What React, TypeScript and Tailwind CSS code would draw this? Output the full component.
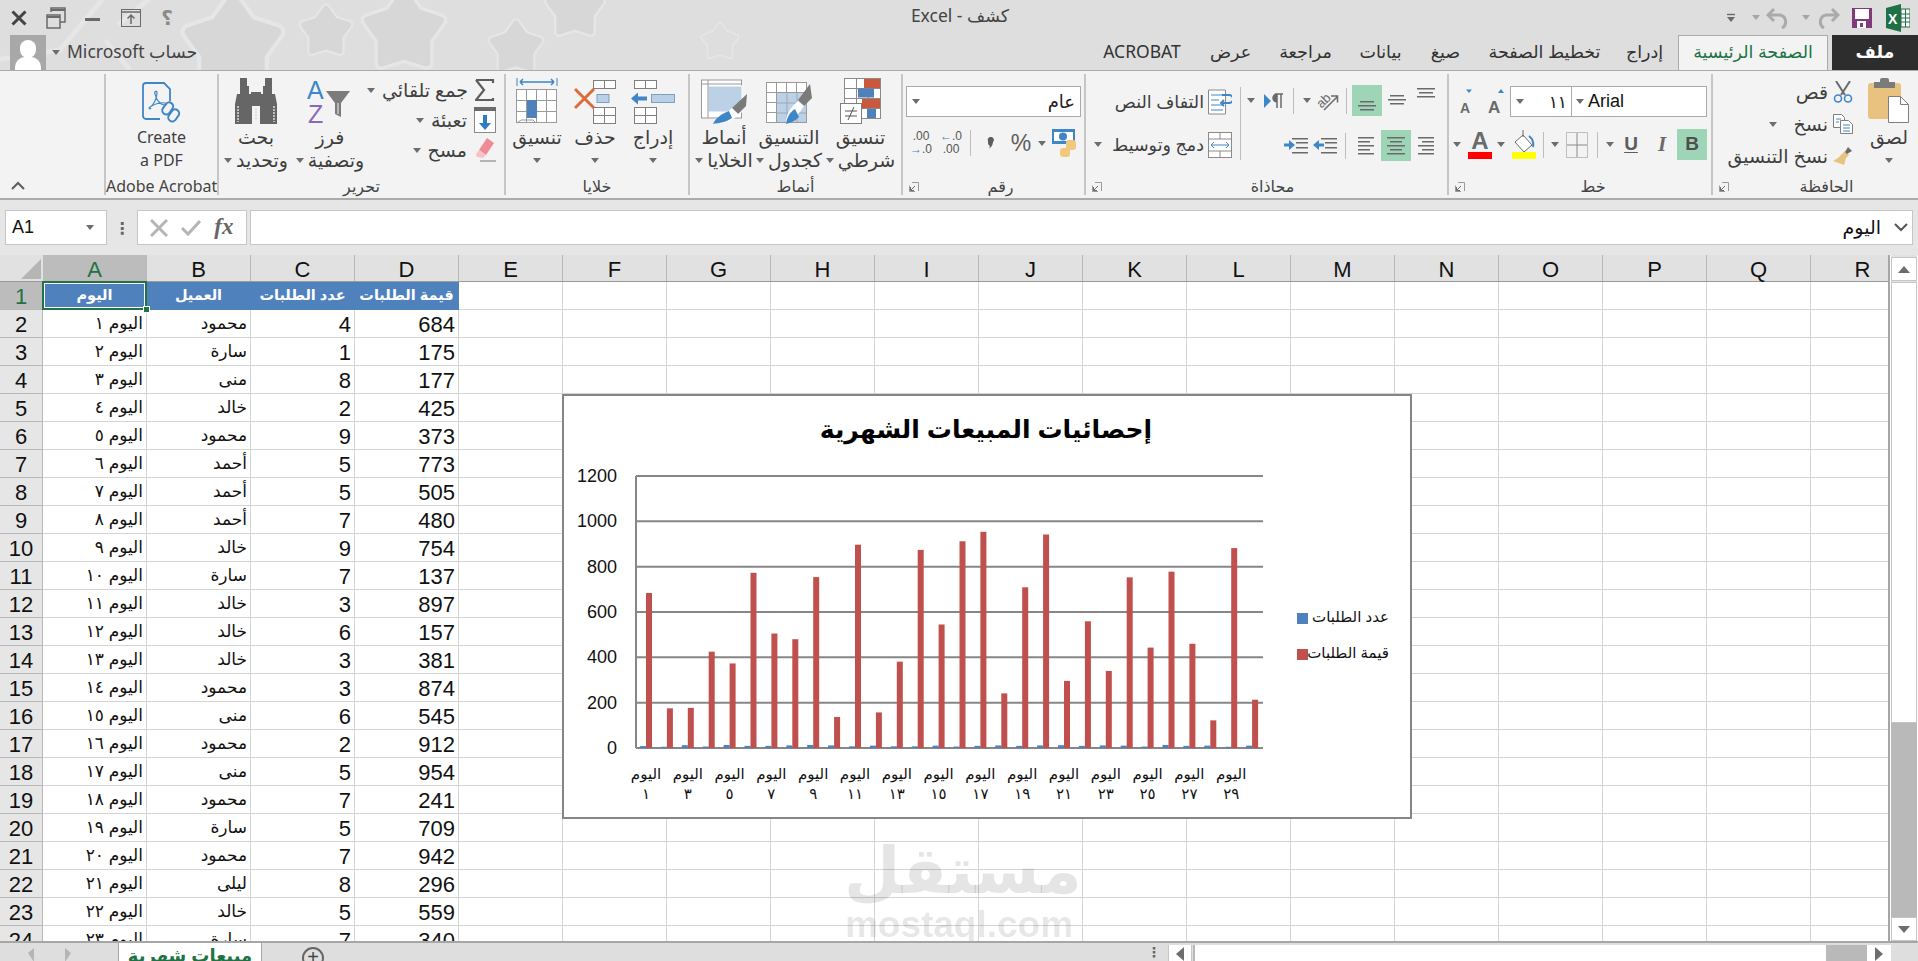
import type { ReactNode } from "react";

const UI = "font-['Noto_Sans','DejaVu_Sans',sans-serif]";

const ROWS: [string, number, number][] = [
  ["محمود", 4, 684],
  ["سارة", 1, 175],
  ["منى", 8, 177],
  ["خالد", 2, 425],
  ["محمود", 9, 373],
  ["أحمد", 5, 773],
  ["أحمد", 5, 505],
  ["أحمد", 7, 480],
  ["خالد", 9, 754],
  ["سارة", 7, 137],
  ["خالد", 3, 897],
  ["خالد", 6, 157],
  ["خالد", 3, 381],
  ["محمود", 3, 874],
  ["منى", 6, 545],
  ["محمود", 2, 912],
  ["منى", 5, 954],
  ["محمود", 7, 241],
  ["سارة", 5, 709],
  ["محمود", 7, 942],
  ["ليلى", 8, 296],
  ["خالد", 5, 559],
  ["سارة", 7, 340],
];

// the last days are below the fold, read off the chart
const CHART_DATA = [
  ...ROWS.map((r) => [r[1], r[2]]),
  [6, 753],
  [2, 443],
  [9, 778],
  [5, 460],
  [6, 122],
  [1, 882],
  [6, 213],
];

const COLS = "ABCDEFGHIJKLMNOPQR".split("");

const toArabic = (n: number) =>
  String(n).replace(/\d/g, (d) => "٠١٢٣٤٥٦٧٨٩"[Number(d)]);

function Caret({ className = "" }: { className?: string }) {
  return (
    <svg width="8" height="5" viewBox="0 0 8 5" className={`shrink-0 ${className}`}>
      <path d="M0 0h8L4 5z" fill="#6d6d6d" />
    </svg>
  );
}

function Sep({ className = "h-[26px]" }: { className?: string }) {
  return <div className={`w-[1px] bg-[#bdbdbd] ${className}`} />;
}

function Launcher() {
  return (
    <svg width="10" height="10" viewBox="0 0 10 10" className="absolute left-[6px] bottom-[3px]">
      <path d="M3 .5h6.500V9M.5 3.500V9.500H6" fill="none" stroke="#9a9a9a" />
      <path d="M6 4L1.500 8.500M1.500 5v3.500H5" fill="none" stroke="#6a6a6a" />
    </svg>
  );
}

function Star({ x, y, r, outline }: { x: number; y: number; r: number; outline?: boolean }) {
  const pts = Array.from({ length: 10 }, (_, i) => {
    const a = (Math.PI / 5) * i - Math.PI / 2;
    const rad = i % 2 ? r * 0.62 : r;
    return `${x + rad * Math.cos(a)},${y + rad * Math.sin(a)}`;
  }).join(" ");
  return (
    <g strokeLinejoin="round">
      <polygon points={pts} fill="#e6e6e6" stroke="#e6e6e6" strokeWidth={r * 0.38} />
      <polygon points={pts} fill={outline ? "#dedede" : "#d7d7d7"} stroke={outline ? "#dedede" : "#d7d7d7"} strokeWidth={r * 0.2} />
    </g>
  );
}

function Lines({ rows }: { rows: [number, number][] }) {
  return (
    <svg width="22" height="22" viewBox="0 0 22 22">
      {rows.map(([y, w], i) => (
        <rect key={i} x={(22 - w) / 2} y={y} width={w} height="1.500" fill="#6a6a6a" />
      ))}
    </svg>
  );
}

function AlignLeft() {
  return (
    <svg width="20" height="22" viewBox="0 0 20 22">
      {[2, 6, 10, 14, 18].map((y, i) => (
        <rect key={y} x="2" y={y} width={i % 2 ? 12 : 16} height="1.500" fill="#6a6a6a" />
      ))}
    </svg>
  );
}

function AlignRight() {
  return (
    <svg width="20" height="22" viewBox="0 0 20 22">
      {[2, 6, 10, 14, 18].map((y, i) => (
        <rect key={y} x={i % 2 ? 6 : 2} y={y} width={i % 2 ? 12 : 16} height="1.500" fill="#6a6a6a" />
      ))}
    </svg>
  );
}

function Indent({ flip }: { flip?: boolean }) {
  return (
    <svg width="24" height="18" viewBox="0 0 24 18">
      <rect x="8" y="1" width="16" height="1.500" fill="#6a6a6a" />
      <rect x="12" y="5" width="12" height="1.500" fill="#6a6a6a" />
      <rect x="12" y="10" width="12" height="1.500" fill="#6a6a6a" />
      <rect x="8" y="15" width="16" height="1.500" fill="#6a6a6a" />
      {flip ? (
        <path d="M0 6.500h5V3l6 5-6 5V9.500H0z" fill="#3f86c8" />
      ) : (
        <path d="M11 6.500H6V3L0 8l6 5V9.500h5z" fill="#3f86c8" />
      )}
    </svg>
  );
}

function PasteIcon() {
  return (
    <svg width="42" height="46" viewBox="0 0 42 46">
      <rect x="0" y="5" width="33" height="36" rx="3" fill="#e8c27e" />
      <rect x="6" y="4" width="21" height="6" fill="#7b7b7b" />
      <rect x="12" y="0" width="9" height="6" rx="2" fill="#7b7b7b" />
      <path d="M20.500 18.500h12l8 8v18h-20z" fill="#fff" stroke="#7f7f7f" />
      <path d="M32.500 18.500v8h8" fill="none" stroke="#7f7f7f" />
    </svg>
  );
}

function ScissorsIcon() {
  return (
    <svg width="20" height="22" viewBox="0 0 20 22" fill="none">
      <path d="M3 0l9 14M17 0L8 14" stroke="#6a6a6a" strokeWidth="2" />
      <circle cx="5" cy="17.500" r="3.500" stroke="#3f86c8" strokeWidth="1.600" />
      <circle cx="15" cy="17.500" r="3.500" stroke="#3f86c8" strokeWidth="1.600" />
    </svg>
  );
}

function CopyIcon() {
  return (
    <svg width="20" height="20" viewBox="0 0 20 20" fill="#fff">
      <path d="M.5.500h8l3 3v10H.5z" stroke="#7f7f7f" />
      <path d="M7.500 6.500h8l4 4v9h-12z" stroke="#7f7f7f" />
      <path d="M3 5h5M3 8h3M10 11h7M10 14h7M10 17h7" stroke="#3f86c8" />
    </svg>
  );
}

function BrushIcon() {
  return (
    <svg width="20" height="20" viewBox="0 0 20 20">
      <path d="M12 5l4 4-3 3-2 7-11-4 5-3 4-4z" fill="#e8c27e" />
      <path d="M12 6l3-5 4 4-5 3z" fill="#6a6a6a" />
    </svg>
  );
}

function SigmaIcon() {
  return (
    <svg width="20" height="24" viewBox="0 0 20 24">
      <path d="M1 2h17v3M18 20v2H1l8-10-8-10" fill="none" stroke="#5d5d5d" strokeWidth="2.200" />
    </svg>
  );
}

function FillIcon() {
  return (
    <svg width="22" height="26" viewBox="0 0 22 26">
      <rect x=".5" y=".5" width="21" height="25" fill="#fff" stroke="#8a8a8a" />
      <rect x="0" y="0" width="22" height="4" fill="#6a6a6a" />
      <path d="M9 8h4v8h4l-6 7-6-7h4z" fill="#2f7bbf" />
    </svg>
  );
}

function EraserIcon() {
  return (
    <svg width="22" height="24" viewBox="0 0 22 24">
      <path d="M13 0l7 5-8 12-7-5z" fill="#ef8a97" />
      <path d="M5 12l7 5-3 3-6-1-1-3z" fill="#f7c3c9" />
      <path d="M6 23h16" stroke="#8a8a8a" strokeWidth="1.200" />
    </svg>
  );
}

function Binoculars() {
  return (
    <svg width="44" height="46" viewBox="0 0 44 46">
      <path d="M6 0h7v8h2v8h3v30H1V26l2-10h3zM31 0h7v16h3l2 10v20H26V16h3V8h2z" fill="#666" />
      <rect x="17" y="14" width="10" height="14" fill="#666" />
      <path d="M4 28v16M40 28v16M22 30v12" stroke="#dcdcdc" strokeWidth="1.500" strokeDasharray="2 1" />
    </svg>
  );
}

function SortFilter() {
  return (
    <svg width="46" height="46" viewBox="0 0 46 46">
      <text x="0" y="21" fontFamily="Liberation Sans" fontSize="25" fill="#3f86c8">A</text>
      <text x="1" y="45" fontFamily="Liberation Sans" fontSize="25" fill="#8a68b8">Z</text>
      <path d="M19 13h24l-9 12v14l-6-3V25z" fill="#7b7b7b" />
      <path d="M31 25v11" stroke="#f3f3f3" />
    </svg>
  );
}

function FormatTableIcon() {
  const cells = [];
  for (let r = 0; r < 3; r++) {
    for (let c = 0; c < 4; c++) {
      cells.push(<rect key={`${r}-${c}`} x={c * 10 + 0.5} y={r * 11 + 11.5} width="10" height="11" fill="#fff" stroke="#9a9a9a" />);
    }
  }
  return (
    <svg width="42" height="46" viewBox="0 0 42 46">
      {cells}
      <rect x="11" y="22" width="10" height="18" fill="#4f81bd" />
      <path d="M1 45l4-3h12l3 3" fill="none" stroke="#9a9a9a" />
      <path d="M1 0v8M41 0v8" stroke="#3f86c8" />
      <path d="M4 4h34M4 4l3-3M4 4l3 3M38 4l-3-3M38 4l-3 3" stroke="#3f86c8" strokeWidth="1.500" fill="none" />
    </svg>
  );
}

function CellRow({ x, y, h }: { x: number; y: number; h: number }) {
  return (
    <g fill="#fff" stroke="#7f7f7f">
      <rect x={x} y={y} width="11" height={h} />
      <rect x={x + 11} y={y} width="11" height={h} />
    </g>
  );
}

function DeleteCellsIcon() {
  return (
    <svg width="42" height="44" viewBox="0 0 42 44">
      <CellRow x={19.5} y={0.5} h={8} />
      <rect x="23" y="14.500" width="12" height="8" fill="#b9d0e8" stroke="#7f9fc0" />
      <CellRow x={19.5} y={27.5} h={8} />
      <CellRow x={19.5} y={35.5} h={8} />
      <path d="M1 9l19 19M20 9L1 28" stroke="#dd6b3c" strokeWidth="3" />
    </svg>
  );
}

function InsertCellsIcon() {
  return (
    <svg width="44" height="44" viewBox="0 0 44 44">
      <CellRow x={3.5} y={0.5} h={8} />
      <rect x="20.500" y="14.500" width="23" height="8" fill="#b9d0e8" stroke="#7f9fc0" />
      <path d="M21 11" />
      <path d="M0 18.500l7-6v4h9v4H7v4z" fill="#3f86c8" />
      <CellRow x={3.5} y={27.5} h={8} />
      <CellRow x={3.5} y={35.5} h={8} />
    </svg>
  );
}

function CondFormatIcon() {
  return (
    <svg width="42" height="46" viewBox="0 0 42 46">
      <g fill="#fff" stroke="#8a8a8a">
        {[0, 1, 2, 3].map((r) => (
          <g key={r}>
            <rect x="4.500" y={0.5 + r * 10} width="12" height="10" />
            <rect x="16.500" y={0.5 + r * 10} width="12" height="10" />
            <rect x="28.500" y={0.5 + r * 10} width="12" height="10" />
          </g>
        ))}
      </g>
      <rect x="24" y="1" width="16" height="9" fill="#c9583c" />
      <rect x="18" y="10.500" width="16" height="9" fill="#4f81bd" />
      <rect x="22" y="21" width="18" height="9" fill="#c9583c" />
      <rect x="27" y="31" width="9" height="9" fill="#4f81bd" />
      <rect x=".5" y="25.500" width="21" height="20" fill="#fff" stroke="#7f7f7f" />
      <path d="M5 33h12M5 38h12M8 42l6-13" stroke="#555" />
    </svg>
  );
}

function TableStyleIcon() {
  return (
    <svg width="46" height="46" viewBox="0 0 46 46">
      <g fill="#fff" stroke="#9a9a9a">
        {[0, 1, 2, 3].map((r) =>
          [0, 1, 2, 3].map((c) => (
            <rect key={`${r}${c}`} x={c * 10 + 0.5} y={r * 10 + 4.5} width="10" height="10" />
          ))
        )}
      </g>
      <rect x="11" y="15" width="29" height="29" fill="#bcd0e6" />
      <path d="M21 15v29M31 15v29M11 25h29M11 35h29" stroke="#9aa8b8" />
      <path d="M44 6l2 14-8 8-6-6z" fill="#7b7b7b" />
      <path d="M32 23l6 5-4 6c-5 5-8 7-14 11 0-8 3-14 12-22z" fill="#fff" />
      <path d="M20 46c4-1 9-3 13-7l-4-8c-5 3-8 8-9 15z" fill="#3f86c8" />
    </svg>
  );
}

function CellStyleIcon() {
  return (
    <svg width="46" height="46" viewBox="0 0 46 46">
      <rect x=".5" y="2" width="40" height="38" fill="#fff" stroke="#9a9a9a" />
      <rect x="7" y="8" width="34" height="26" fill="#bcd0e6" stroke="#fff" />
      <path d="M1 6h39M7 2v38" stroke="#9a9a9a" />
      <path d="M46 16l-1 12-8 8-6-6z" fill="#7b7b7b" />
      <path d="M31 30l6 6-3 4c-5 3-9 5-15 6 1-6 5-11 12-16z" fill="#fff" />
      <path d="M12 46c6-1 14-2 19-6l-3-7c-8 3-13 7-16 13z" fill="#3f86c8" />
    </svg>
  );
}

function AcrobatIcon() {
  return (
    <svg width="40" height="42" viewBox="0 0 40 42" fill="none" stroke="#3f86c8" strokeWidth="1.800">
      <path d="M18 37H4a3 3 0 0 1-3-3V4a3 3 0 0 1 3-3h18l6 6v12" />
      <path d="M7 26c4-2 8-9 8-15 0-3-3-2-2 1 1 5 5 11 10 11 2 0 2-2 0-2-5-1-10 1-15 4-2 1 0 3 1 1" strokeWidth="1.200" />
      <g strokeWidth="2">
        <rect x="22" y="20" width="8" height="13" rx="4" transform="rotate(35 26 26)" />
        <rect x="28" y="27" width="8" height="13" rx="4" transform="rotate(35 32 33)" />
      </g>
    </svg>
  );
}

function LargeBtn({
  className,
  icon,
  lines,
  caret,
  textClass = "text-[19px]",
}: {
  className: string;
  icon: ReactNode;
  lines: string[];
  caret?: boolean;
  textClass?: string;
}) {
  return (
    <div className={`flex flex-col items-center shrink-0 ${className}`}>
      <div className="h-[46px] mt-[4px] flex items-end justify-center">{icon}</div>
      <div className={`mt-[2px] leading-[23px] text-[#3f3f3f] whitespace-nowrap text-center ${textClass}`}>
        <div>{lines[0]}</div>
        {lines[1] ? (
          <div className="flex items-center justify-center gap-[4px]">
            {caret && <Caret />}
            <span>{lines[1]}</span>
          </div>
        ) : (
          caret && (
            <div className="h-[23px] flex items-center justify-center">
              <Caret />
            </div>
          )
        )}
      </div>
    </div>
  );
}

function SmallRow({ text, icon }: { text: string; icon: ReactNode }) {
  return (
    <div className="h-[30px] flex items-center justify-end gap-[7px]">
      <Caret />
      <span className="text-[19px] leading-[30px] text-[#3f3f3f] whitespace-nowrap">{text}</span>
      <div className="w-[22px] flex justify-center">{icon}</div>
    </div>
  );
}

function Group({
  className,
  label,
  launcher,
  labelClass = "",
  children,
}: {
  className: string;
  label: string;
  launcher?: boolean;
  labelClass?: string;
  children: ReactNode;
}) {
  return (
    <div className={`relative flex flex-col h-[121px] border-l-2 border-[#c6c6c6] shrink-0 ${className}`}>
      <div className="h-[104px] flex items-start">{children}</div>
      <div className={`h-[17px] text-center text-[16px] leading-[17px] text-[#444] whitespace-nowrap ${labelClass}`}>
        {label}
      </div>
      {launcher && <Launcher />}
    </div>
  );
}

function Slot({ className, children }: { className: string; children: ReactNode }) {
  return <div className={`flex items-center justify-center shrink-0 h-full ${className}`}>{children}</div>;
}

function TitleBar() {
  return (
    <div className="relative h-[70px] bg-[#dedede] overflow-hidden">
      <svg className="absolute left-0 top-0" width="800" height="70">
        <path d="M-5 60L60 50 110 -10" fill="none" stroke="#e6e6e6" strokeWidth="5" />
        <path d="M118 25l38-32M130 70l-25 -30" fill="none" stroke="#e6e6e6" strokeWidth="5" />
        <Star x={233} y={46} r={46} />
        <Star x={326} y={32} r={24} />
        <Star x={404} y={32} r={38} />
        <Star x={516} y={48} r={25} />
        <Star x={575} y={10} r={27} />
        <Star x={720} y={42} r={17} outline />
      </svg>

      <div className="relative h-[35px] flex items-center">
        <div className="flex items-center w-[200px] h-full">
          <Slot className="w-[38px]">
            <svg width="16" height="16" viewBox="0 0 16 16">
              <path d="M1.500 1.500l13 13M14.500 1.500l-13 13" stroke="#444" strokeWidth="3" />
            </svg>
          </Slot>
          <Slot className="w-[36px]">
            <svg width="20" height="22" viewBox="0 0 20 22" fill="none" stroke="#6a6a6a" strokeWidth="1.500">
              <path d="M5 5V1h14v14h-5" />
              <path d="M5 3h14" strokeWidth="2" />
              <rect x="1" y="8" width="13" height="13" />
              <path d="M1 10h13" strokeWidth="2" />
            </svg>
          </Slot>
          <Slot className="w-[37px]">
            <div className="w-[15px] h-[3px] bg-[#6a6a6a] mt-[4px]" />
          </Slot>
          <Slot className="w-[39px]">
            <svg width="20" height="18" viewBox="0 0 20 18" fill="none" stroke="#6a6a6a">
              <rect x=".5" y=".5" width="19" height="17" />
              <path d="M.5 3h19" strokeWidth="1.500" />
              <path d="M10 15V6M6.500 9.500L10 6l3.500 3.500" strokeWidth="1.500" />
            </svg>
          </Slot>
          <Slot className="w-[34px]">
            <span className="text-[20px] font-bold text-[#8a8a8a] font-['Liberation_Sans','DejaVu_Sans',sans-serif]">؟</span>
          </Slot>
        </div>
        <div dir="rtl" className="absolute left-[860px] top-[2px] w-[200px] text-center text-[17.500px] leading-[26px] text-[#444]">
          كشف - Excel
        </div>
        <div className="ml-auto flex items-center h-full pr-[8px]">
          <svg width="10" height="10" viewBox="0 0 10 10" className="mr-[16px]">
            <path d="M1 1.500h8" stroke="#6a6a6a" strokeWidth="1.400" />
            <path d="M1 4h8L5 9z" fill="#6a6a6a" />
          </svg>
          <Caret className="opacity-50 mr-[6px]" />
          <svg width="24" height="22" viewBox="0 0 24 22" fill="none" stroke="#aaa" strokeWidth="3" className="mr-[12px]">
            <path d="M8 2L2 8l6 6" />
            <path d="M3 8h11a7 7 0 0 1 2 13" />
          </svg>
          <Caret className="opacity-50 mr-[6px]" />
          <svg width="24" height="22" viewBox="0 0 24 22" fill="none" stroke="#aaa" strokeWidth="3" className="mr-[12px]">
            <path d="M16 2l6 6-6 6" />
            <path d="M21 8H10a7 7 0 0 0-2 13" />
          </svg>
          <svg width="20" height="20" viewBox="0 0 20 20" className="mr-[14px]">
            <rect width="20" height="20" fill="#80397b" />
            <rect x="3" y="1" width="14" height="10" fill="#fff" />
            <rect x="5" y="13" width="9" height="7" fill="#fff" />
            <rect x="8" y="15" width="3" height="4" fill="#80397b" />
          </svg>
          <svg width="24" height="28" viewBox="0 0 24 28">
            <path d="M0 4l15-4v28L0 24z" fill="#1f7145" />
            <rect x="15" y="5" width="9" height="18" fill="#fff" stroke="#1f7145" />
            <path d="M15 10h9M15 14h9M15 18h9M19.500 5v18" stroke="#1f7145" />
            <text x="2" y="20" fontFamily="Liberation Sans" fontWeight="700" fontSize="14" fill="#fff">X</text>
          </svg>
        </div>
      </div>

      <div className="relative h-[35px] flex items-stretch">
        <div className="flex items-center ml-[10px] w-[190px]">
          <div className="w-[36px] h-[35px] bg-[#a8a8a8] overflow-hidden relative shrink-0">
            <div className="absolute left-[10px] top-[5px] w-[16px] h-[18px] rounded-full bg-white" />
            <div className="absolute left-[5px] top-[22px] w-[26px] h-[20px] rounded-t-[10px] bg-white" />
          </div>
          <Caret className="ml-[6px]" />
          <span dir="rtl" className="ml-[7px] text-[17.500px] leading-[31px] pb-[3px] text-[#444] whitespace-nowrap">
            حساب Microsoft
          </span>
        </div>
        <div dir="rtl" className="ml-auto flex items-stretch text-[17.500px] text-[#333] whitespace-nowrap">
          <div className="w-[86px] bg-[#2d2d2d] text-white font-bold flex items-center justify-center pb-[3px]">ملف</div>
          <div className="w-[4px]" />
          <div className="w-[150px] bg-[#f3f3f3] border border-b-0 border-[#ababab] text-[#217346] flex items-center justify-center relative z-10 pb-[3px]">
            الصفحة الرئيسية
          </div>
          <div className="w-[67px] flex items-center justify-center pb-[3px]">إدراج</div>
          <div className="w-[133px] flex items-center justify-center pb-[3px]">تخطيط الصفحة</div>
          <div className="w-[65px] flex items-center justify-center pb-[3px]">صيغ</div>
          <div className="w-[65px] flex items-center justify-center pb-[3px]">بيانات</div>
          <div className="w-[85px] flex items-center justify-center pb-[3px]">مراجعة</div>
          <div className="w-[65px] flex items-center justify-center pb-[3px]">عرض</div>
          <div className="w-[112px] flex items-center justify-center pb-[3px]">ACROBAT</div>
        </div>
      </div>
    </div>
  );
}

function Ribbon() {
  return (
    <div className="h-[130px] bg-[#f3f3f3] border-t border-b-2 border-[#ababab] pt-[3px] flex items-start">
      <div className="relative w-[104px] h-[121px] shrink-0">
        <svg width="14" height="9" viewBox="0 0 14 9" className="absolute left-[11px] bottom-[5px]">
          <path d="M1 8l6-6 6 6" fill="none" stroke="#5d5d5d" strokeWidth="2" />
        </svg>
      </div>

      <Group className="w-[113px]" label="Adobe Acrobat">
        <LargeBtn className="w-[111px]" icon={<AcrobatIcon />} lines={["Create", "a PDF"]} textClass="text-[16px]" />
      </Group>

      <Group className="w-[287px]" label="تحرير">
        <LargeBtn className="w-[74px]" icon={<Binoculars />} lines={["بحث", "وتحديد"]} caret />
        <LargeBtn className="w-[74px]" icon={<SortFilter />} lines={["فرز", "وتصفية"]} caret />
        <div className="w-[137px] pr-[8px] pt-[1px]">
          <SmallRow text="جمع تلقائي" icon={<SigmaIcon />} />
          <SmallRow text="تعبئة" icon={<FillIcon />} />
          <SmallRow text="مسح" icon={<EraserIcon />} />
        </div>
      </Group>

      <Group className="w-[184px]" label="خلايا">
        <LargeBtn className="w-[62px]" icon={<FormatTableIcon />} lines={["تنسيق"]} caret />
        <LargeBtn className="w-[54px]" icon={<DeleteCellsIcon />} lines={["حذف"]} caret />
        <LargeBtn className="w-[62px]" icon={<InsertCellsIcon />} lines={["إدراج"]} caret />
      </Group>

      <Group className="w-[213px]" label="أنماط">
        <LargeBtn className="w-[68px]" icon={<CellStyleIcon />} lines={["أنماط", "الخلايا"]} caret />
        <LargeBtn className="w-[62px]" icon={<TableStyleIcon />} lines={["التنسيق", "كجدول"]} caret />
        <LargeBtn className="w-[81px]" icon={<CondFormatIcon />} lines={["تنسيق", "شرطي"]} caret />
      </Group>

      <Group className="w-[183px]" label="رقم" launcher labelClass="pl-[14px]">
        <div className="ml-[3px] mt-[12px] w-[175px]">
          <div className="h-[31px] bg-white border border-[#ababab] flex items-center px-[5px]">
            <Caret />
            <span className="ml-auto text-[18px] text-[#222]">عام</span>
          </div>
          <div className="h-[30px] mt-[11px] flex items-center">
            <Slot className="w-[30px]">
              <div className="text-[12px] leading-[13px] text-[#555] text-center font-['Liberation_Sans']">
                .00
                <br />
                <span className="text-[#3f86c8]">→</span>.0
              </div>
            </Slot>
            <Slot className="w-[30px]">
              <div className="text-[12px] leading-[13px] text-[#555] text-center font-['Liberation_Sans']">
                <span className="text-[#3f86c8]">←</span>.0
                <br />
                .00
              </div>
            </Slot>
            <Slot className="w-[9px]">
              <Sep />
            </Slot>
            <Slot className="w-[30px]">
              <svg width="8" height="12" viewBox="0 0 8 12">
                <path d="M2 4a3 3 0 1 1 5 1c0 3-2 5-4 7 1-2 1-3 0-4-1 0-1-2-1-4z" fill="#5d5d5d" />
              </svg>
            </Slot>
            <Slot className="w-[32px]">
              <span className="text-[23px] text-[#5d5d5d] font-['Liberation_Sans']">%</span>
            </Slot>
            <Slot className="w-[10px]">
              <Caret />
            </Slot>
            <Slot className="w-[34px]">
              <svg width="24" height="28" viewBox="0 0 24 28">
                <rect width="23" height="15" fill="#3f86c8" />
                <rect x="2" y="3" width="19" height="9" fill="#fff" />
                <circle cx="11" cy="7.500" r="4" fill="#3f86c8" />
                <rect x="14" y="11" width="10" height="10" rx="3" fill="#f0c97f" />
                <rect x="8" y="19" width="10" height="9" rx="3" fill="#f0c97f" />
              </svg>
            </Slot>
          </div>
        </div>
      </Group>

      <Group className="w-[363px]" label="محاذاة" launcher labelClass="pl-[12px]">
        <div className="w-[154px] mt-[12px] pr-[8px] shrink-0">
          <div className="h-[31px] flex items-center justify-end gap-[4px]">
            <span className="text-[17.500px] text-[#3f3f3f] whitespace-nowrap">التفاف النص</span>
            <svg width="24" height="26" viewBox="0 0 24 26" fill="none">
              <path d="M.5 1h17v24H.5z" fill="#fff" stroke="#8a8a8a" />
              <path d="M3 6h12M3 11h8M3 16h12M3 21h12" stroke="#3f86c8" />
              <path d="M14 6h7a2.500 2.500 0 0 1 0 8h-8m3-3l-3 3 3 3" stroke="#3f86c8" strokeWidth="1.800" />
            </svg>
          </div>
          <div className="h-[31px] mt-[12px] flex items-center justify-end gap-[4px]">
            <Caret className="mr-[6px]" />
            <span className="text-[17.500px] text-[#3f3f3f] whitespace-nowrap">دمج وتوسيط</span>
            <svg width="24" height="26" viewBox="0 0 24 26" fill="none">
              <rect x=".5" y=".5" width="23" height="25" fill="#fff" stroke="#8a8a8a" />
              <path d="M1 7h22M1 19h22M12 1v6M12 19v6" stroke="#8a8a8a" />
              <path d="M3 13h18M6 10l-3 3 3 3M18 10l3 3-3 3" stroke="#3f86c8" />
            </svg>
          </div>
        </div>
        <div className="w-[1px] h-[73px] mt-[13px] bg-[#bdbdbd] shrink-0" />
        <div className="mt-[11px] w-[200px] pl-[1px] shrink-0">
          <div className="h-[31px] flex">
            <Slot className="w-[18px]">
              <Caret />
            </Slot>
            <Slot className="w-[28px]">
              <svg width="20" height="16" viewBox="0 0 20 16">
                <path d="M0 1l7 7-7 7z" fill="#3f86c8" />
                <path d="M11 1h8M13 1v14M17 1v14M13 1a4 4 0 0 0 0 8" stroke="#6a6a6a" strokeWidth="1.500" fill="#6a6a6a" />
              </svg>
            </Slot>
            <Slot className="w-[10px]">
              <Sep />
            </Slot>
            <Slot className="w-[18px]">
              <Caret />
            </Slot>
            <Slot className="w-[24px]">
              <svg width="22" height="20" viewBox="0 0 22 20" fill="none" stroke="#6a6a6a" strokeWidth="1.500">
                <text x="0" y="13" fontFamily="Liberation Sans" fontSize="13" fill="#6a6a6a" stroke="none" transform="rotate(-45 8 10)">ab</text>
                <path d="M7 19L20 6M14 5h6.500v6.500" />
              </svg>
            </Slot>
            <Slot className="w-[12px]">
              <Sep />
            </Slot>
            <div className="w-[30px] h-full bg-[#9fd5b7] flex items-end justify-center pb-[1px]">
              <Lines rows={[[8, 14], [12, 18], [16, 14]]} />
            </div>
            <Slot className="w-[30px]">
              <Lines rows={[[5, 14], [9, 18], [13, 14]]} />
            </Slot>
            <div className="w-[30px] h-full flex justify-center">
              <Lines rows={[[3, 18], [7, 14], [11, 18]]} />
            </div>
          </div>
          <div className="h-[31px] mt-[14px] flex">
            <div className="w-[40px]" />
            <Slot className="w-[30px]">
              <Indent flip />
            </Slot>
            <Slot className="w-[28px]">
              <Indent />
            </Slot>
            <Slot className="w-[12px]">
              <Sep />
            </Slot>
            <Slot className="w-[30px]">
              <AlignLeft />
            </Slot>
            <Slot className="w-[30px] bg-[#9fd5b7]">
              <Lines rows={[[2, 18], [6, 12], [10, 18], [14, 12], [18, 18]]} />
            </Slot>
            <Slot className="w-[30px]">
              <AlignRight />
            </Slot>
          </div>
        </div>
      </Group>

      <Group className="w-[264px]" label="خط" launcher labelClass="pl-[26px]">
        <div className="mt-[12px] w-[262px]">
          <div className="h-[31px] flex">
            <Slot className="w-[34px]">
              <svg width="16" height="26" viewBox="0 0 16 26">
                <path d="M8 4l-3-3.500h6z" fill="#3f86c8" transform="translate(3 0)" />
                <text x="2" y="24" fontFamily="Liberation Sans" fontWeight="700" fontSize="14" fill="#6a6a6a">A</text>
              </svg>
            </Slot>
            <Slot className="w-[27px]">
              <svg width="20" height="26" viewBox="0 0 20 26">
                <path d="M14 0l3 4h-6z" fill="#3f86c8" />
                <text x="1" y="24" fontFamily="Liberation Sans" fontWeight="700" fontSize="17" fill="#6a6a6a">A</text>
              </svg>
            </Slot>
            <div className="w-[62px] bg-white border border-[#ababab] flex items-center pl-[5px] pr-[4px]">
              <Caret />
              <span className="ml-auto text-[17px] text-[#222]">١١</span>
            </div>
            <div className="w-[135px] bg-white border border-l-0 border-[#ababab] flex items-center pl-[4px]">
              <Caret />
              <span className="ml-[4px] text-[18px] text-[#111] font-['Liberation_Sans']">Arial</span>
            </div>
          </div>
          <div className="h-[31px] mt-[12px] flex items-center">
            <Slot className="w-[16px]">
              <Caret />
            </Slot>
            <Slot className="w-[30px]">
              <div className="flex flex-col items-center">
                <span className="text-[24px] leading-[22px] font-bold text-[#6a6a6a] font-['Liberation_Sans']">A</span>
                <div className="w-[24px] h-[7px] bg-[#ff0000]" />
              </div>
            </Slot>
            <Slot className="w-[12px]">
              <Caret />
            </Slot>
            <Slot className="w-[34px]">
              <svg width="24" height="30" viewBox="0 0 24 30">
                <path d="M11 5l9 10-8 7-9-10z" fill="#fff" stroke="#6a6a6a" />
                <path d="M11 0v7" stroke="#6a6a6a" />
                <path d="M17 6c4 3 5 6 4 11" fill="none" stroke="#3f86c8" strokeWidth="2" />
                <rect y="22" width="24" height="7" fill="#ffff00" />
              </svg>
            </Slot>
            <Slot className="w-[4px]">
              <Sep />
            </Slot>
            <Slot className="w-[20px]">
              <Caret />
            </Slot>
            <Slot className="w-[24px]">
              <svg width="22" height="26" viewBox="0 0 22 26" fill="none" stroke="#8a8a8a" strokeDasharray="1 1">
                <rect x=".5" y=".5" width="21" height="25" />
                <path d="M11 1v24M1 13h20" strokeDasharray="none" strokeWidth="1" />
              </svg>
            </Slot>
            <Slot className="w-[16px]">
              <Sep />
            </Slot>
            <Slot className="w-[10px]">
              <Caret />
            </Slot>
            <Slot className="w-[32px]">
              <span className="text-[19px] font-bold text-[#5d5d5d] underline underline-offset-2 font-['Liberation_Sans']">U</span>
            </Slot>
            <Slot className="w-[30px]">
              <span className="text-[21px] italic font-bold text-[#6a6a6a] font-['Liberation_Serif']">I</span>
            </Slot>
            <Slot className="w-[30px] bg-[#9fd5b7]">
              <span className="text-[19px] font-bold text-[#4f4f4f] font-['Liberation_Sans']">B</span>
            </Slot>
          </div>
        </div>
      </Group>

      <Group className="w-[207px]" label="الحافظة" launcher labelClass="pl-[22px]">
        <div className="w-[147px] pr-[6px] pt-[2px] shrink-0">
          <div className="h-[32px] flex items-center justify-end gap-[4px]">
            <span className="text-[19px] text-[#3f3f3f]">قص</span>
            <div className="w-[22px] flex justify-center">
              <ScissorsIcon />
            </div>
          </div>
          <div className="h-[32px] flex items-center justify-end gap-[4px]">
            <Caret className="mr-[12px]" />
            <span className="text-[19px] text-[#3f3f3f]">نسخ</span>
            <div className="w-[22px] flex justify-center">
              <CopyIcon />
            </div>
          </div>
          <div className="h-[32px] flex items-center justify-end gap-[4px]">
            <span className="text-[19px] text-[#3f3f3f] whitespace-nowrap">نسخ التنسيق</span>
            <div className="w-[22px] flex justify-center">
              <BrushIcon />
            </div>
          </div>
        </div>
        <LargeBtn className="w-[58px]" icon={<PasteIcon />} lines={["لصق"]} caret />
      </Group>
    </div>
  );
}

function FormulaBar() {
  return (
    <div className="h-[55px] bg-[#e6e6e6] pt-[10px] flex items-start">
      <div className="ml-[5px] w-[102px] h-[35px] bg-white border border-[#c6c6c6] flex items-center px-[6px]">
        <span className="text-[18px] text-[#111] font-['Liberation_Sans']">A1</span>
        <Caret className="ml-auto mr-[6px]" />
      </div>
      <div className="w-[30px] h-[35px] flex items-center justify-center text-[#666] text-[16px] font-bold leading-none">⋮</div>
      <div className="w-[110px] h-[35px] bg-white border border-[#c6c6c6] flex items-center justify-around px-[6px]">
        <svg width="18" height="18" viewBox="0 0 18 18">
          <path d="M1 1l16 16M17 1L1 17" stroke="#b5b5b5" strokeWidth="3" />
        </svg>
        <svg width="20" height="18" viewBox="0 0 20 18">
          <path d="M1 9l6 6L19 2" fill="none" stroke="#b5b5b5" strokeWidth="3" />
        </svg>
        <span className="text-[23px] italic font-bold text-[#666] font-['Liberation_Serif']">fx</span>
      </div>
      <div className="ml-[3px] w-[1663px] h-[35px] bg-white border border-[#c6c6c6] flex items-center justify-end pr-[31px] relative">
        <span className="text-[19px] text-[#111]">اليوم</span>
        <svg width="14" height="9" viewBox="0 0 14 9" className="absolute right-[4px] top-[12px]">
          <path d="M1 1l6 6 6-6" fill="none" stroke="#555" strokeWidth="2" />
        </svg>
      </div>
    </div>
  );
}

function Chart() {
  const y0 = 354;
  const perUnit = 45.33 / 200;
  return (
    <div className="absolute left-[562px] top-[139px] w-[850px] h-[425px] bg-white border-2 border-[#868686]">
      <svg width="846" height="421" viewBox="2 2 846 421" className="font-['Liberation_Sans','DejaVu_Sans',sans-serif]">
        <text x="424" y="44" textAnchor="middle" direction="rtl" fontSize="25" fontWeight="700" fill="#000">
          إحصائيات المبيعات الشهرية
        </text>
        {[0, 200, 400, 600, 800, 1000, 1200].map((v) => {
          const y = y0 - v * perUnit;
          return (
            <g key={v}>
              <line x1="74" x2="701" y1={y} y2={y} stroke="#868686" strokeWidth="2" />
              <text x="55" y={y + 6} textAnchor="end" fontSize="18" fill="#111">
                {v}
              </text>
            </g>
          );
        })}
        <line x1="74" x2="74" y1="82" y2={y0} stroke="#868686" strokeWidth="2" />
        {CHART_DATA.map(([qty, val], i) => {
          const x = 84 + i * 20.9;
          return (
            <g key={i}>
              <rect x={x - 6} y={y0 - qty * perUnit - 1} width="6" height={qty * perUnit + 1} fill="#4f81bd" />
              <rect x={x} y={y0 - val * perUnit} width="6" height={val * perUnit} fill="#c0504d" />
            </g>
          );
        })}
        {CHART_DATA.map((_, i) =>
          i % 2 === 0 ? (
            <g key={i} fontSize="15" fill="#111" textAnchor="middle">
              <text x={84 + i * 20.9} y="385" direction="rtl">اليوم</text>
              <text x={84 + i * 20.9} y="405">{toArabic(i + 1)}</text>
            </g>
          ) : null
        )}
        <rect x="735" y="219" width="11" height="11" fill="#4f81bd" />
        <text x="827" y="228" textAnchor="end" fontSize="15" fill="#111" direction="ltr">عدد الطلبات</text>
        <rect x="735" y="255" width="11" height="11" fill="#c0504d" />
        <text x="827" y="264" textAnchor="end" fontSize="15" fill="#111" direction="ltr">قيمة الطلبات</text>
      </svg>
    </div>
  );
}

function Sheet() {
  return (
    <div className="flex h-[686px]">
      <div className="relative w-[1890px] overflow-hidden font-['Liberation_Sans','DejaVu_Sans',sans-serif] border-r-2 border-[#a6a6a6]">
        <div className="flex h-[27px] bg-[#e1e1e1] border-b border-[#9a9a9a]">
          <div className="w-[43px] relative shrink-0">
            <div className="absolute right-[2px] bottom-[2px] w-0 h-0 border-l-[20px] border-l-transparent border-b-[20px] border-b-[#b5b5b5]" />
          </div>
          {COLS.map((c, i) => (
            <div
              key={c}
              className={`w-[104px] shrink-0 text-center text-[22px] leading-[29px] border-r border-[#b8b8b8] ${
                i === 0 ? "bg-[#bcbcbc] text-[#217346]" : "text-[#111]"
              }`}
            >
              {c}
            </div>
          ))}
        </div>
        {Array.from({ length: 24 }, (_, r) => {
          const row = r > 0 ? ROWS[r - 1] : null;
          return (
            <div key={r} className="flex h-[28px]">
              <div
                className={`w-[43px] shrink-0 border-b border-r border-[#b8b8b8] text-center text-[22px] leading-[29px] ${
                  r === 0 ? "bg-[#bcbcbc] text-[#217346]" : "bg-[#e6e6e6] text-[#111]"
                }`}
              >
                {r + 1}
              </div>
              {COLS.map((c, i) => {
                const base = "w-[104px] shrink-0 border-b border-r border-[#d4d4d4] whitespace-nowrap overflow-hidden";
                if (r === 0 && i < 4) {
                  const head = ["اليوم", "العميل", "عدد الطلبات", "قيمة الطلبات"][i];
                  return (
                    <div key={c} className={`${base} bg-[#4f81bd] border-transparent text-white font-bold text-[14.500px] leading-[27px] text-center`}>
                      {head}
                    </div>
                  );
                }
                if (row && i === 0)
                  return (
                    <div key={c} dir="rtl" className={`${base} text-[17px] leading-[27px] pr-[3px] text-[#111]`}>
                      اليوم {toArabic(r)}
                    </div>
                  );
                if (row && i === 1)
                  return (
                    <div key={c} dir="rtl" className={`${base} text-[17px] leading-[27px] pr-[3px] text-[#111]`}>
                      {row[0]}
                    </div>
                  );
                if (row && (i === 2 || i === 3))
                  return (
                    <div key={c} className={`${base} text-[22px] leading-[29px] text-right pr-[3px] text-[#111]`}>
                      {i === 2 ? row[1] : row[2]}
                    </div>
                  );
                return <div key={c} className={base} />;
              })}
            </div>
          );
        })}
        {/* A1 selection */}
        <div className="absolute left-[42px] top-[26px] w-[105px] h-[29px] border-2 border-[#217346] pointer-events-none">
          <div className="w-full h-full border border-white" />
        </div>
        <div className="absolute left-[143px] top-[51px] w-[7px] h-[7px] bg-[#217346] border border-white z-10" />
        <div className="absolute left-[844px] top-[582px] w-[230px] text-center text-black/10 pointer-events-none font-bold">
          <div className="text-[65px] leading-[68px]">مستقل</div>
          <div className="text-[37px] leading-[40px] font-['Liberation_Sans']">mostaql.com</div>
        </div>
        <Chart />
      </div>
      <div className="w-[26px] ml-[1px] bg-[#b9b9b9] flex flex-col">
        <div className="h-[27px] bg-[#e1e1e1] pb-[1px] pt-[2px]">
          <div className="h-full bg-white border border-[#c6c6c6] flex items-center justify-center">
            <svg width="12" height="7" viewBox="0 0 12 7">
              <path d="M0 7l6-7 6 7z" fill="#6d6d6d" />
            </svg>
          </div>
        </div>
        <div className="h-[441px] bg-white border border-[#c6c6c6]" />
        <div className="flex-1" />
        <div className="h-[24px] bg-white border border-[#c6c6c6] flex items-center justify-center">
          <svg width="12" height="7" viewBox="0 0 12 7">
            <path d="M0 0l6 7 6-7z" fill="#6d6d6d" />
          </svg>
        </div>
      </div>
    </div>
  );
}

function BottomBar() {
  return (
    <div className="h-[20px] bg-[#dedede] border-t-2 border-[#a6a6a6] flex items-start overflow-hidden relative">
      <svg width="70" height="16" viewBox="0 0 70 16" className="absolute left-[26px] top-[4px]">
        <path d="M2 6l6-5v14z" fill="#b5b5b5" />
        <path d="M39 1l6 5-6 9z" fill="#b5b5b5" />
      </svg>
      <div className="absolute left-[118px] -top-[2px] w-[144px] h-[24px] bg-white border-x border-t-0 border-[#a6a6a6] text-center text-[18px] leading-[30px] font-bold text-[#217346] font-['Liberation_Sans','DejaVu_Sans',sans-serif]">
        مبيعات شهرية
      </div>
      <div className="absolute left-[302px] top-[4px] w-[22px] h-[22px] rounded-full border-2 border-[#666] text-center text-[20px] leading-[17px] text-[#444] font-['Liberation_Sans']">
        +
      </div>
      <div className="absolute left-[1147px] top-[2px] text-[14px] leading-none text-[#666] font-bold">⋮</div>
      <div className="absolute left-[1168px] top-[2px] h-[16px] flex">
        <div className="w-[24px] bg-white border-x border-[#c6c6c6] flex items-start justify-center pt-[2px]">
          <svg width="8" height="14" viewBox="0 0 8 14">
            <path d="M8 0L0 7l8 7z" fill="#6d6d6d" />
          </svg>
        </div>
        <div className="w-[633px] ml-[1px] bg-white border-l-2 border-[#b9b9b9]" />
        <div className="w-[41px] bg-[#b9b9b9]" />
        <div className="w-[24px] bg-white flex items-start justify-center pt-[2px]">
          <svg width="8" height="14" viewBox="0 0 8 14">
            <path d="M0 0l8 7-8 7z" fill="#6d6d6d" />
          </svg>
        </div>
      </div>
    </div>
  );
}

export default function App() {
  return (
    <div className={`w-[1918px] h-[961px] overflow-hidden bg-white ${UI}`}>
      <TitleBar />
      <Ribbon />
      <FormulaBar />
      <Sheet />
      <BottomBar />
    </div>
  );
}
